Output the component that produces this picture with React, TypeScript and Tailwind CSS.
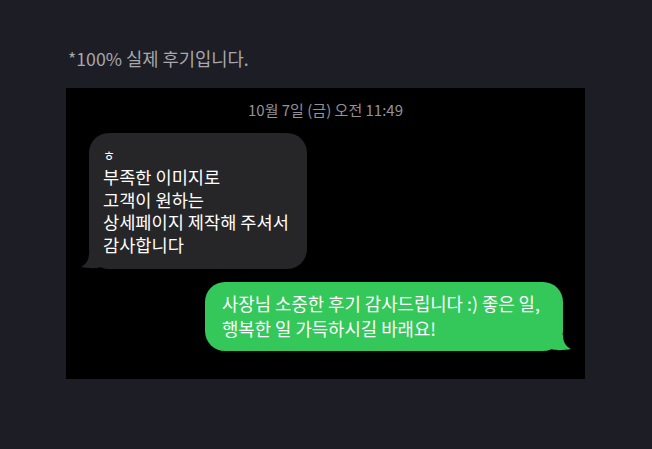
const font = { fontFamily: '"Noto Sans CJK KR", "Noto Sans", sans-serif' }

function Tail({ side, color }: { side: 'left' | 'right'; color: string }) {
  // small iOS-style bubble tail
  const d =
    side === 'left'
      ? 'M20 0 L20 14 C14 16 6 15 0 14 C6 11 8 6 8 0 Z'
      : 'M0 0 L0 14 C6 16 14 15 20 14 C14 11 12 6 12 0 Z'
  return (
    <svg
      width="20"
      height="16"
      viewBox="0 0 20 16"
      className={side === 'left' ? 'absolute -left-[8px] bottom-0' : 'absolute -right-[8px] bottom-0'}
    >
      <path d={d} fill={color} />
    </svg>
  )
}

export default function App() {
  return (
    <div className="h-[449px] w-[652px] bg-[#1c1d25] pl-[66px] pt-[46px]" style={font}>
      <p className="pl-[2px] text-[17.7px] leading-[24px] text-[#a8a8ad]">*100% 실제 후기입니다.</p>

      <div className="mt-[18px] h-[291px] w-[519px] bg-black pt-[12px]">
        <p className="text-center text-[15px] leading-[20px] text-[#929297]">10월 7일 (금) 오전 11:49</p>

        <div className="ml-[23px] mt-[13px] flex">
          <div className="relative w-[218px] rounded-[20px] bg-[#262628] pb-[13px] pl-[14px] pr-[8px] pt-[10px] text-[17.6px] leading-[22.5px] text-white">
            <div className="text-[13px] leading-[23px]">ㅎ</div>
            <div>부족한 이미지로</div>
            <div>고객이 원하는</div>
            <div className="whitespace-nowrap">상세페이지 제작해 주셔서</div>
            <div>감사합니다</div>
            <Tail side="left" color="#262628" />
          </div>
        </div>

        <div className="mr-[22px] mt-[13px] flex justify-end">
          <div className="relative w-[358px] rounded-[20px] bg-[#34c759] pb-[10px] pl-[17px] pr-[8px] pt-[9px] text-[17.8px] leading-[25px] text-white">
            <div className="whitespace-nowrap">사장님 소중한 후기 감사드립니다 :) 좋은 일,</div>
            <div>행복한 일 가득하시길 바래요!</div>
            <Tail side="right" color="#34c759" />
          </div>
        </div>
      </div>
    </div>
  )
}
